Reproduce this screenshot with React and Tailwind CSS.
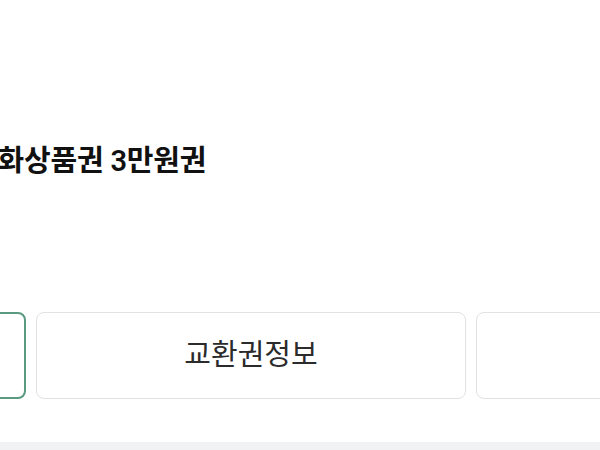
const tabs = ["상품정보", "교환권정보", "취소/환불"];

const App = () => {
  const active = 0;

  return (
    <div
      className="w-[600px] h-[450px] overflow-hidden bg-white flex flex-col"
      style={{ fontFamily: 'Roboto, "Noto Sans CJK KR", sans-serif' }}
    >
      {/* Title */}
      <div className="pt-[143px] h-[190px] ml-[-29px] whitespace-nowrap">
        <h1 className="text-[29px] leading-[36px] font-semibold text-[#111] tracking-[-0.2px]">
          문화상품권 3만원권
        </h1>
      </div>

      {/* Tabs */}
      <div className="mt-[122px] flex gap-[10px] ml-[-404px]">
        {tabs.map((label, i) => (
          <button
            key={label}
            className={`w-[430px] h-[87px] shrink-0 rounded-[8px] bg-white flex items-center justify-center text-[29px] text-[#2b2b2b] ${
              i === active ? "border-2 border-[#5a9a80]" : "border border-[#e2e2e2]"
            }`}
          >
            {label}
          </button>
        ))}
      </div>

      {/* Bottom divider */}
      <div className="mt-auto h-[8px] bg-[#f1f2f4]" />
    </div>
  );
};

export default App;
